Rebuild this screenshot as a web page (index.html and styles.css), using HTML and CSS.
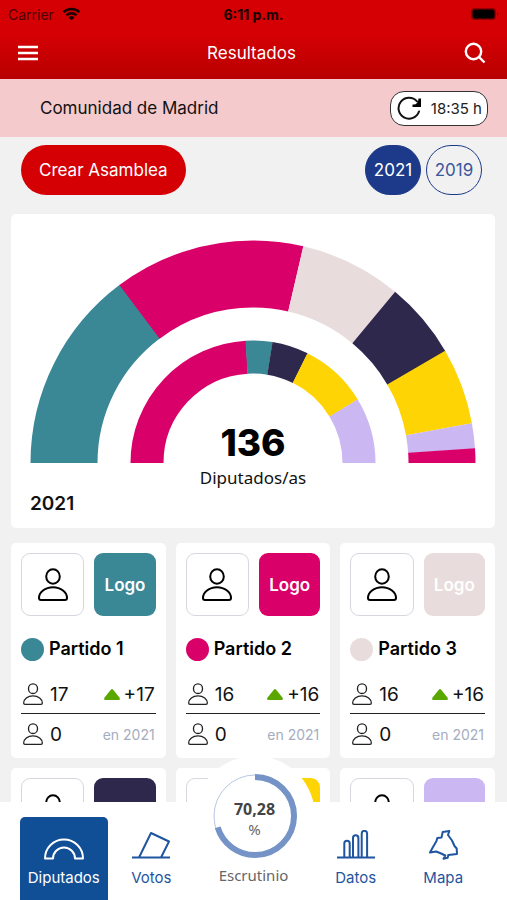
FILE: index.html
```html
<!DOCTYPE html>
<html lang="es">
<head>
  <meta charset="UTF-8">
  <meta name="viewport" content="width=device-width, initial-scale=1.0">
  <title>Resultados</title>
  <link rel="stylesheet" href="styles.css">
</head>
<body>
  <svg class="symbols" aria-hidden="true">
    <symbol id="person" viewBox="0 0 30 33">
      <ellipse cx="15" cy="8.500" rx="6.800" ry="7.300"/>
      <path d="M3 32h24c1.200 0 2-.8 2-2 0-5.500-6-10.700-14-10.700S1 24.500 1 30c0 1.200.8 2 2 2z"/>
    </symbol>
    <symbol id="up" viewBox="0 0 16 11">
      <path d="M7 .6 .4 8.800Q-.6 11 1.500 11h13Q16.600 11 15.600 8.800L9 .6Q8-.4 7 .6z"/>
    </symbol>
  </svg>

  <header class="top">
    <div class="status-bar">
      <span class="carrier">Carrier
        <svg width="19" height="14" viewBox="0 0 19 14">
          <path class="wave" d="M1.500 5.200a11.500 11.500 0 0 1 16 0M4.500 8.300a7.200 7.200 0 0 1 10 0"/>
          <path d="M9.500 13.500 6.600 10.500a4.200 4.200 0 0 1 5.800 0z"/>
        </svg>
      </span>
      <strong>6:11 p.m.</strong>
      <svg class="battery" width="28" height="12" viewBox="0 0 28 12">
        <rect x="0" y="0" width="25" height="12" rx="3" opacity=".3"/>
        <rect x="1.500" y="1.500" width="22" height="9" rx="2"/>
        <path d="M26 4q1.500 1 1.500 2T26 8z" opacity=".5"/>
      </svg>
    </div>
    <div class="nav-bar">
      <button class="icon-button" aria-label="Menú">
        <svg width="22" height="16" viewBox="0 0 22 16"><path d="M1 2h20M1 8h20M1 14h20"/></svg>
      </button>
      <h1>Resultados</h1>
      <button class="icon-button" aria-label="Buscar">
        <svg width="22" height="22" viewBox="0 0 22 22"><circle cx="9.500" cy="9.500" r="7.700"/><path d="M15 15l5.500 5.500"/></svg>
      </button>
    </div>
  </header>

  <div class="location">
    <span>Comunidad de Madrid</span>
    <button class="refresh">
      <svg width="26" height="26" viewBox="0 0 26 26">
        <path class="loop" d="M22 16.500A10.500 10.500 0 1 1 20 6.300"/>
        <path d="M24 3.500V12h-8.500V9.500q3 .5 4.500-1.500t1.500-4.500z"/>
      </svg>
      18:35 h
    </button>
  </div>

  <main>
    <div class="actions">
      <button class="create">Crear Asamblea</button>
      <button class="year selected">2021</button>
      <button class="year">2019</button>
    </div>

    <section class="card chart-card">
      <div class="chart">
        <svg viewBox="0 0 446 223">
          <g class="ring outer">
            <path class="teal" pathLength="180" stroke-dasharray="53.3 400" d="M34 223a189 189 0 0 1 378 0"/>
            <path class="pink" pathLength="180" stroke-dasharray="50 400" stroke-dashoffset="-53.1" d="M34 223a189 189 0 0 1 378 0"/>
            <path class="sand" pathLength="180" stroke-dasharray="26.600 400" stroke-dashoffset="-103.1" d="M34 223a189 189 0 0 1 378 0"/>
            <path class="navy" pathLength="180" stroke-dasharray="20.200 400" stroke-dashoffset="-129.700" d="M34 223a189 189 0 0 1 378 0"/>
            <path class="yellow" pathLength="180" stroke-dasharray="20 400" stroke-dashoffset="-149.700" d="M34 223a189 189 0 0 1 378 0"/>
            <path class="lilac" pathLength="180" stroke-dasharray="6.600 400" stroke-dashoffset="-169.700" d="M34 223a189 189 0 0 1 378 0"/>
            <path class="pink" pathLength="180" stroke-dasharray="10 400" stroke-dashoffset="-176.200" d="M34 223a189 189 0 0 1 378 0"/>
          </g>
          <g class="ring inner">
            <path class="pink" pathLength="180" stroke-dasharray="86.600 400" d="M117 223a106 106 0 0 1 212 0"/>
            <path class="teal" pathLength="180" stroke-dasharray="12.900 400" stroke-dashoffset="-86.400" d="M117 223a106 106 0 0 1 212 0"/>
            <path class="navy" pathLength="180" stroke-dasharray="17.300 400" stroke-dashoffset="-99.200" d="M117 223a106 106 0 0 1 212 0"/>
            <path class="yellow" pathLength="180" stroke-dasharray="32.400 400" stroke-dashoffset="-116.400" d="M117 223a106 106 0 0 1 212 0"/>
            <path class="lilac" pathLength="180" stroke-dasharray="40 400" stroke-dashoffset="-148.700" d="M117 223a106 106 0 0 1 212 0"/>
          </g>
        </svg>
        <strong class="total">136</strong>
      </div>
      <p class="unit">Diputados/as</p>
      <h2>2021</h2>
    </section>

    <div class="parties">
      <article class="card party teal">
        <div class="pictures">
          <div class="photo"><svg class="person"><use href="#person"/></svg></div>
          <div class="logo">Logo</div>
        </div>
        <h3><span class="dot"></span>Partido 1</h3>
        <div class="seats current">
          <svg class="person"><use href="#person"/></svg><span>17</span>
          <span class="change"><svg class="up"><use href="#up"/></svg>+17</span>
        </div>
        <div class="seats">
          <svg class="person"><use href="#person"/></svg><span>0</span>
          <small>en 2021</small>
        </div>
      </article>

      <article class="card party pink">
        <div class="pictures">
          <div class="photo"><svg class="person"><use href="#person"/></svg></div>
          <div class="logo">Logo</div>
        </div>
        <h3><span class="dot"></span>Partido 2</h3>
        <div class="seats current">
          <svg class="person"><use href="#person"/></svg><span>16</span>
          <span class="change"><svg class="up"><use href="#up"/></svg>+16</span>
        </div>
        <div class="seats">
          <svg class="person"><use href="#person"/></svg><span>0</span>
          <small>en 2021</small>
        </div>
      </article>

      <article class="card party sand">
        <div class="pictures">
          <div class="photo"><svg class="person"><use href="#person"/></svg></div>
          <div class="logo">Logo</div>
        </div>
        <h3><span class="dot"></span>Partido 3</h3>
        <div class="seats current">
          <svg class="person"><use href="#person"/></svg><span>16</span>
          <span class="change"><svg class="up"><use href="#up"/></svg>+16</span>
        </div>
        <div class="seats">
          <svg class="person"><use href="#person"/></svg><span>0</span>
          <small>en 2021</small>
        </div>
      </article>

      <article class="card party navy">
        <div class="pictures">
          <div class="photo"><svg class="person"><use href="#person"/></svg></div>
          <div class="logo"></div>
        </div>
      </article>
      <article class="card party yellow">
        <div class="pictures">
          <div class="photo"><svg class="person"><use href="#person"/></svg></div>
          <div class="logo"></div>
        </div>
      </article>
      <article class="card party lilac">
        <div class="pictures">
          <div class="photo"><svg class="person"><use href="#person"/></svg></div>
          <div class="logo"></div>
        </div>
      </article>
    </div>
  </main>

  <nav class="tabs">
    <a class="tab active" href="#diputados">
      <svg width="40" height="30" viewBox="0 0 40 30"><path d="M1 28.500a19 19 0 0 1 38 0h-8a11 11 0 0 0-22 0z"/></svg>
      Diputados
    </a>
    <a class="tab" href="#votos">
      <svg width="40" height="30" viewBox="0 0 40 30"><path d="M1 27.500h38M8 27.500 20 3l18 8.500L30 27.500"/></svg>
      Votos
    </a>
    <a class="tab count" href="#escrutinio">
      <span class="badge">
        <svg class="progress" viewBox="0 0 86 86">
          <circle class="track" cx="43" cy="43" r="41"/>
          <path class="bar" pathLength="100" stroke-dasharray="70.28 100" d="M43 4a39 39 0 0 1 0 78a39 39 0 0 1 0-78"/>
        </svg>
        <b>70,28</b>
        <span>%</span>
      </span>
      Escrutinio
    </a>
    <a class="tab" href="#datos">
      <svg width="40" height="30" viewBox="0 0 40 30"><path d="M1 27.500h38M8.300 27.500V13.500a2.700 2.700 0 0 1 5.400 0v14M17 27.500V8a2.700 2.700 0 0 1 5.400 0v19.500M25.700 27.500V3.500a2.700 2.700 0 0 1 5.400 0v24"/></svg>
      Datos
    </a>
    <a class="tab" href="#mapa">
      <svg width="30" height="30" viewBox="0 0 30 30"><path d="M14.700 2 21.300 1 20 5 24 10.500 26.500 16 28.700 18.500 29 24 20.300 25 19.700 27.700 15.500 28.700 17.300 25.500 12 23 8 21.500 2 22.500 5 17 8.500 11 9.300 8 13.500 7.500z"/></svg>
      Mapa
    </a>
  </nav>
</body>
</html>
```
FILE: styles.css
```css
* {
  box-sizing: border-box;
}

html, body {
  height: 100%;
}

body {
  margin: 0;
  display: flex;
  flex-direction: column;
  font-family: Inter, "Noto Sans", sans-serif;
  font-size: 17px;
  color: #111;
  background-color: #f1f1f1;
}

h1, h2, h3, p {
  margin: 0;
}

button {
  font: inherit;
  cursor: pointer;
}

svg {
  display: block;
}

.symbols {
  position: absolute;
  width: 0;
  height: 0;
}

/* party colors */
.teal { --party: #3a8796; }
.pink { --party: #da006a; }
.sand { --party: #e8dddc; }
.navy { --party: #2f284d; }
.yellow { --party: #ffd404; }
.lilac { --party: #cbb7f1; }

.top {
  flex: none;
  color: white;
  background: linear-gradient(#d40004 45%, #b80000);
}

.status-bar {
  display: grid;
  grid-template-columns: 1fr auto 1fr;
  align-items: center;
  height: 28px;
  padding: 0 8px;
  font-size: 14px;
  color: #1a0000;
}

.carrier {
  display: flex;
  align-items: center;
  gap: 8px;
  color: #4d0000;
}

.carrier svg {
  fill: #1a0000;
}

.carrier .wave {
  fill: none;
  stroke: #1a0000;
  stroke-width: 2.5;
}

.battery {
  justify-self: end;
}

.nav-bar {
  display: flex;
  align-items: center;
  justify-content: space-between;
  height: 51px;
  padding: 0 17px 2px 13px;
}

.nav-bar h1 {
  font-size: 17px;
  font-weight: 400;
}

.icon-button {
  padding: 4px;
  border: none;
  background: none;
}

.icon-button svg {
  fill: none;
  stroke: white;
  stroke-width: 2.4;
}

.location {
  flex: none;
  display: flex;
  align-items: center;
  justify-content: space-between;
  height: 58px;
  padding: 0 19px 0 40px;
  background-color: #f4cacc;
}

.refresh {
  display: flex;
  align-items: center;
  gap: 8px;
  height: 35px;
  padding: 0 5px 0 6px;
  border: 1px solid #333;
  border-radius: 14px;
  background-color: white;
  font-size: 15px;
  color: #222;
}

.refresh .loop {
  fill: none;
  stroke: #111;
  stroke-width: 2;
  stroke-linecap: round;
}

main {
  flex: 1;
  min-height: 0;
  overflow-y: auto;
  scrollbar-width: none;
  padding: 8px 12px 0 11px;
}

.actions {
  display: flex;
  gap: 5px;
  padding: 0 13px 19px 10px;
}

.create {
  height: 50px;
  margin-right: auto;
  padding: 0 18px;
  border: none;
  border-radius: 25px;
  background-color: #d40004;
  color: white;
}

.year {
  width: 56px;
  height: 50px;
  padding: 0;
  border: 1px solid #1d3a8a;
  border-radius: 28px;
  background: none;
  color: #3a569c;
}

.year.selected {
  background-color: #1d3a8a;
  color: white;
}

.card {
  border-radius: 5px;
  background-color: white;
}

.chart-card {
  padding: 26px 19px 12px;
}

.chart {
  position: relative;
}

.ring {
  fill: none;
}

.ring path {
  stroke: var(--party);
}

.outer {
  stroke-width: 67;
}

.inner {
  stroke-width: 33;
}

.total {
  position: absolute;
  bottom: 0;
  left: 0;
  right: 0;
  text-align: center;
  font-size: 37px;
  line-height: 40px;
  font-weight: 800;
  color: black;
}

.unit {
  margin-top: 3px;
  text-align: center;
  font-family: "Noto Sans", sans-serif;
  line-height: 24px;
}

.chart-card h2 {
  margin-top: 2px;
  font-size: 19px;
  line-height: 24px;
  font-weight: 600;
}

.parties {
  display: grid;
  grid-template-columns: repeat(3, 1fr);
  gap: 10px;
  padding: 15px 0;
}

.party {
  padding: 10px 10px 8px;
}

.pictures {
  display: flex;
  gap: 10px;
}

.photo, .logo {
  flex: 1;
  display: flex;
  align-items: center;
  justify-content: center;
  aspect-ratio: 1;
  border-radius: 9px;
}

.photo {
  border: 1px solid #d5d8de;
}

.logo {
  background-color: var(--party);
  color: white;
  font-weight: 600;
}

.person {
  width: 20px;
  height: 22px;
  fill: none;
  stroke: #222;
  stroke-width: 2;
}

.photo .person {
  width: 30px;
  height: 33px;
  stroke: black;
}

.party h3 {
  display: flex;
  align-items: center;
  gap: 5px;
  margin: 21px 0 19px;
  font-size: 18px;
  line-height: 24px;
  font-weight: 600;
  color: black;
}

.dot {
  width: 23px;
  height: 23px;
  border-radius: 50%;
  background-color: var(--party);
}

.seats {
  display: flex;
  align-items: center;
  gap: 7px;
  height: 36px;
  padding: 4px 1px 0 2px;
  font-size: 19px;
}

.seats.current {
  height: 34px;
  padding-top: 0;
  padding-bottom: 5px;
  border-bottom: 1px solid #222;
}

.change {
  display: flex;
  align-items: center;
  gap: 4px;
  margin-left: auto;
}

.up {
  width: 16px;
  height: 11px;
  fill: #5aa700;
}

.seats small {
  margin-left: auto;
  font-size: 14px;
  color: #a5adc0;
}

.tabs {
  position: relative;
  z-index: 1;
  flex: none;
  display: grid;
  grid-template-columns: 3fr 3fr 4fr 3fr 3fr;
  padding: 15px 20px 0;
  background-color: white;
}

.tab {
  display: flex;
  flex-direction: column;
  align-items: center;
  gap: 8px;
  height: 83px;
  padding-top: 13px;
  border-radius: 5px 5px 0 0;
  font-size: 15px;
  line-height: 20px;
  text-decoration: none;
  color: #1f55a0;
}

.tab > svg {
  fill: none;
  stroke: #1f55a0;
  stroke-width: 2;
  stroke-linejoin: round;
}

.tab.active {
  background-color: #104e96;
  color: white;
}

.tab.active > svg {
  stroke: white;
}

.count {
  position: relative;
  padding-top: 48px;
  font-family: "Noto Sans", sans-serif;
  color: #666;
}

/* round progress that rises above the tab bar, behind its label */
.badge {
  position: absolute;
  z-index: -1;
  top: -61px;
  left: 50%;
  display: flex;
  flex-direction: column;
  align-items: center;
  justify-content: center;
  width: 120px;
  height: 120px;
  margin-left: -59px;
  border-radius: 50%;
  background-color: white;
}

.badge b {
  margin-top: 6px;
  font-size: 16px;
  color: #444;
}

.progress {
  position: absolute;
  width: 86px;
  height: 86px;
  fill: none;
}

.track {
  stroke: #b9c7e4;
}

.bar {
  stroke: #7593c6;
  stroke-width: 6;
}
```
